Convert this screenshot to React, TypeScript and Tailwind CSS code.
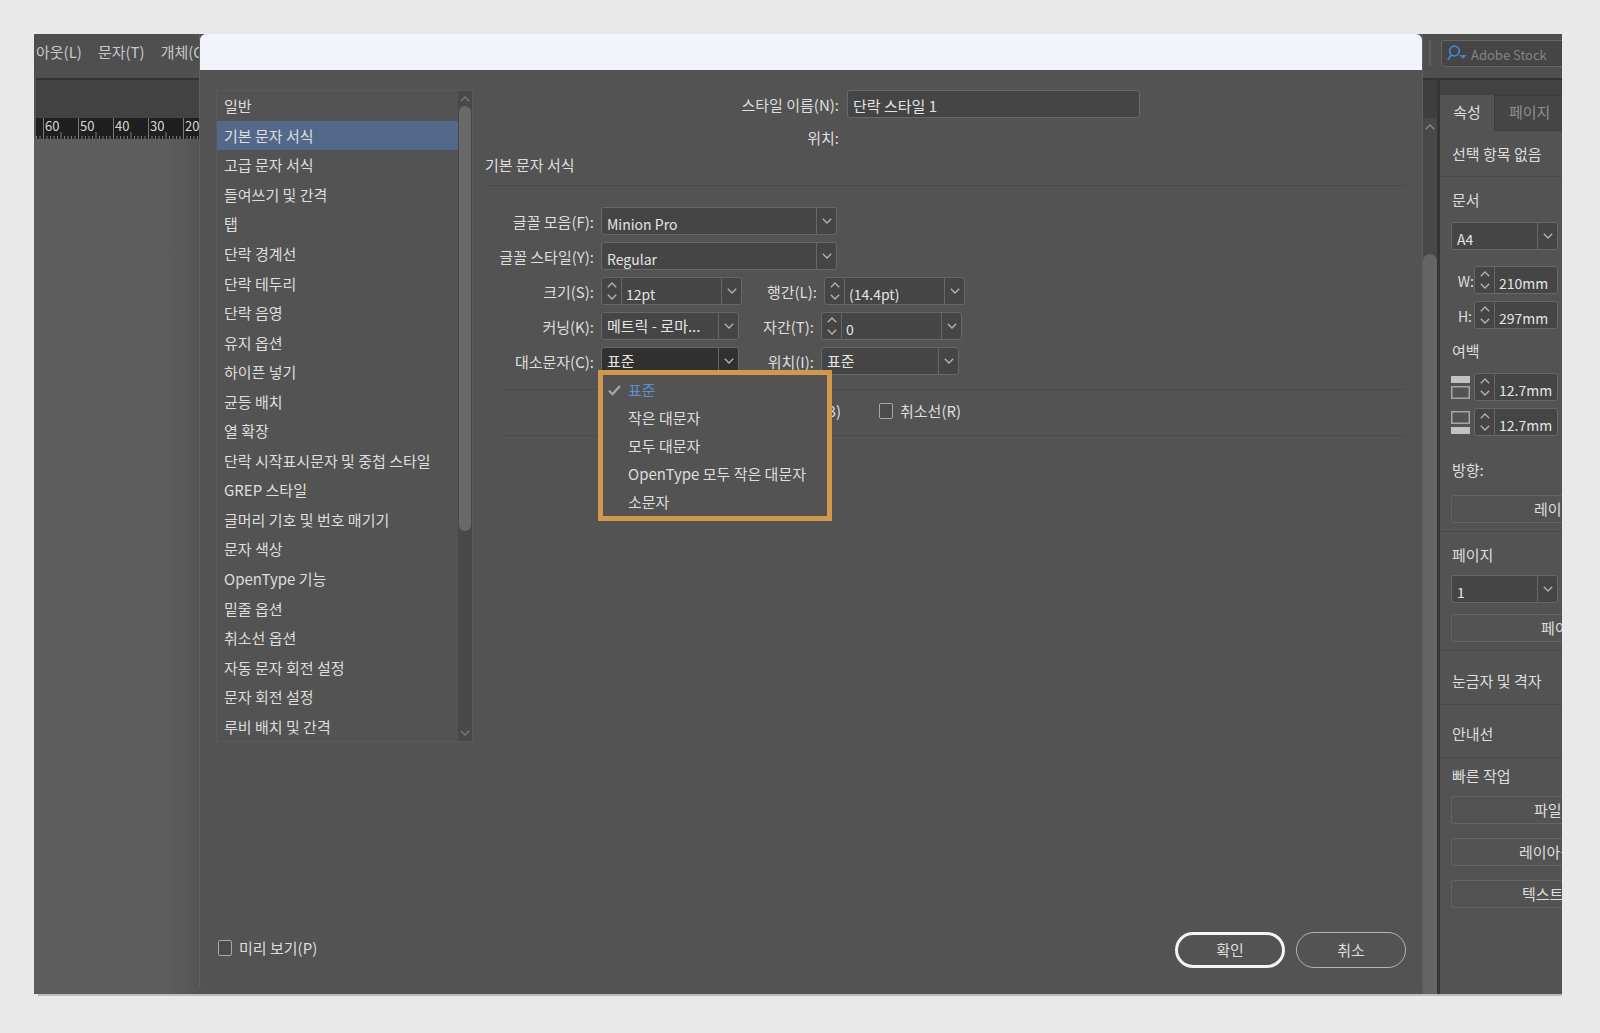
import React from "react";

const categories = [
  "일반",
  "기본 문자 서식",
  "고급 문자 서식",
  "들여쓰기 및 간격",
  "탭",
  "단락 경계선",
  "단락 테두리",
  "단락 음영",
  "유지 옵션",
  "하이픈 넣기",
  "균등 배치",
  "열 확장",
  "단락 시작표시문자 및 중첩 스타일",
  "GREP 스타일",
  "글머리 기호 및 번호 매기기",
  "문자 색상",
  "OpenType 기능",
  "밑줄 옵션",
  "취소선 옵션",
  "자동 문자 회전 설정",
  "문자 회전 설정",
  "루비 배치 및 간격",
];

const caseOptions = ["표준", "작은 대문자", "모두 대문자", "OpenType 모두 작은 대문자", "소문자"];

function Chevron({ up = false, className = "" }: { up?: boolean; className?: string }) {
  return (
    <svg className={className} width="10" height="6" viewBox="0 0 10 6" fill="none" stroke="currentColor" strokeWidth="1.3" aria-hidden="true">
      <path d={up ? "M0.8 5.2 L5 1 L9.2 5.2" : "M0.8 0.8 L5 5 L9.2 0.8"} />
    </svg>
  );
}

function Spinner({ name }: { name: string }) {
  return (
    <span className="flex w-5 shrink-0 flex-col items-center justify-between border-r border-[#666] py-1 text-[#b4b4b4]">
      <button type="button" aria-label={name + " 늘리기"} className="flex"><Chevron up /></button>
      <button type="button" aria-label={name + " 줄이기"} className="flex"><Chevron /></button>
    </span>
  );
}

function SelectBox({ id, value, width, active = false, small = false }: { id: string; value: string; width: string; active?: boolean; small?: boolean }) {
  return (
    <span className={`flex h-7 overflow-hidden rounded-[3px] border border-[#686868] ${active ? "bg-[#303030]" : "bg-[#454545]"} ${width}`}>
      <select id={id} defaultValue={value} className={`min-w-0 flex-1 appearance-none bg-transparent pl-[5px] text-[#e4e4e4] outline-none ${small ? "pt-1.5 text-[14px]" : ""}`}>
        <option>{value}</option>
      </select>
      <span className="pointer-events-none flex w-5 shrink-0 items-center justify-center border-l border-[#666] text-[#b4b4b4]">
        <Chevron />
      </span>
    </span>
  );
}

function NumberBox({ id, name, value, width, dropdown = false }: { id: string; name: string; value: string; width: string; dropdown?: boolean }) {
  return (
    <span className={`flex h-7 overflow-hidden rounded-[3px] border border-[#686868] bg-[#454545] ${width}`}>
      <Spinner name={name} />
      <input id={id} defaultValue={value} className="min-w-0 flex-1 bg-transparent pt-1.5 pl-1 text-[14px] text-[#e4e4e4] outline-none" />
      {dropdown && (
        <button type="button" aria-label={name + " 목록"} className="flex w-5 shrink-0 items-center justify-center border-l border-[#666] text-[#b4b4b4]">
          <Chevron />
        </button>
      )}
    </span>
  );
}

function Check({ label }: { label: string }) {
  return (
    <label className="flex h-5 items-center gap-[7px] whitespace-nowrap">
      <input type="checkbox" className="h-4 w-[14px] shrink-0 appearance-none rounded-[2px] border border-[#a8a8a8] bg-[#4c4c4c]" />
      {label}
    </label>
  );
}

function FirstLabel({ id, children }: { id: string; children: React.ReactNode }) {
  return <label htmlFor={id} className="mr-[7px] w-[109px] pt-px text-right whitespace-nowrap">{children}</label>;
}

function SecondLabel({ id, children }: { id: string; children: React.ReactNode }) {
  return <label htmlFor={id} className="mr-[7px] w-[75px] pt-px text-right whitespace-nowrap">{children}</label>;
}

function Ruler() {
  const ticks = Array.from({ length: 47 }, (_, i) => i);
  return (
    <div className="relative ml-0.5 h-[21px] shrink-0 bg-[#1f1f1f] text-[#d8d8d8]">
      <svg className="absolute inset-0" width="165" height="21" stroke="#7c7c7c" strokeWidth="1" aria-hidden="true">
        {ticks.map((i) => {
          const x = 7.5 + (i - 2) * 3.5;
          const k = (i + 8) % 10;
          return <line key={i} x1={x} x2={x} y1={k === 0 ? 0 : k === 5 ? 14 : 18} y2="21" />;
        })}
      </svg>
      <div className="relative flex pl-[9px] text-[13px] leading-4">
        {["60", "50", "40", "30", "20"].map((n) => (
          <span key={n} className="w-[35px] shrink-0">{n}</span>
        ))}
      </div>
    </div>
  );
}

function MarginIcon({ flipped = false }: { flipped?: boolean }) {
  return (
    <svg width="19" height="23" viewBox="0 0 19 23" aria-hidden="true">
      <rect x="0" y={flipped ? 16 : 0} width="19" height="7" fill="#c2c2c2" />
      <rect x="0.75" y={flipped ? 0.75 : 10.75} width="17.5" height="11.5" fill="none" stroke="#a6a6a6" strokeWidth="1.5" />
    </svg>
  );
}

function WideButton({ children, pad }: { children: React.ReactNode; pad: string }) {
  return (
    <button type="button" className={`flex h-7 w-[240px] shrink-0 items-center rounded-[3px] border border-[#646464] whitespace-nowrap ${pad}`}>
      {children}
    </button>
  );
}

export default function App() {
  return (
    <div className="flex min-h-screen flex-col bg-[#e9e9e9] pt-[34px] pr-[38px] pb-[37px] pl-[34px] font-['Noto_Sans_CJK_KR',sans-serif] text-[15px] leading-5 text-[#dedede]">
      <div className="flex flex-1 overflow-hidden bg-[#535353]">
        <div className="flex w-[165px] shrink-0 flex-col overflow-hidden">
          <nav className="flex h-11 shrink-0 items-start gap-4 bg-[#4f4f4f] pt-2 pl-0.5 whitespace-nowrap text-[#c8c8c8]">
            <button type="button">아웃(L)</button>
            <button type="button">문자(T)</button>
            <button type="button">개체(O)</button>
          </nav>
          <div className="ml-0.5 h-10 shrink-0 border-t-2 border-[#333] bg-[#424242]" />
          <Ruler />
          <div className="flex flex-1 bg-[#5d5d5d]">
            <div className="ml-auto w-8 bg-linear-to-r from-[#5d5d5d] to-[#545454]" />
          </div>
        </div>

        <section role="dialog" aria-label="단락 스타일 옵션" className="flex min-w-0 flex-1 flex-col rounded-b-lg border-x border-[#5f5f5f] bg-[#535353]">
          <header className="h-9 shrink-0 rounded-t-md bg-[#f1f5fb]" />
          <div className="flex flex-1 flex-col pt-5 pr-4 pl-4">
            <div className="flex gap-3">
              <div className="flex h-[652px] w-[257px] shrink-0 border border-[#5a5a5a]">
                <ul className="grid flex-1 auto-rows-fr">
                  {categories.map((c) => (
                    <li key={c} className="flex">
                      <button
                        type="button"
                        className={c === "기본 문자 서식" ? "flex flex-1 items-center bg-[#54698a] pt-px pl-[7px] whitespace-nowrap" : "flex flex-1 items-center pt-px pl-[7px] whitespace-nowrap"}
                      >
                        {c}
                      </button>
                    </li>
                  ))}
                </ul>
                <div className="flex w-[14px] shrink-0 flex-col items-center bg-[#484848] py-[5px] text-[#7c7c7c]">
                  <Chevron up />
                  <div className="mt-1 h-[425px] w-3 rounded-full bg-[#696969]" />
                  <Chevron className="mt-auto" />
                </div>
              </div>

              <div className="min-w-0 flex-1">
                <div className="flex items-center">
                  <label htmlFor="style-name" className="mr-2 w-[354px] pt-0.5 text-right">스타일 이름(N):</label>
                  <input id="style-name" defaultValue="단락 스타일 1" className="h-7 w-[293px] rounded-[3px] border border-[#686868] bg-[#454545] pt-0.5 pl-[5px] text-[#e4e4e4] outline-none" />
                </div>
                <p className="mt-[10px] w-[354px] text-right">위치:</p>
                <h2 className="mt-[7px]">기본 문자 서식</h2>
                <hr className="mt-[10px] border-[#4b4b4b]" />

                <div className="mt-[21px] flex flex-col gap-[7px]">
                  <div className="flex items-center">
                    <FirstLabel id="family">글꼴 모음(F):</FirstLabel>
                    <SelectBox id="family" value="Minion Pro" width="w-[236px]" small />
                  </div>
                  <div className="flex items-center">
                    <FirstLabel id="face">글꼴 스타일(Y):</FirstLabel>
                    <SelectBox id="face" value="Regular" width="w-[236px]" small />
                  </div>
                  <div className="flex items-center">
                    <FirstLabel id="size">크기(S):</FirstLabel>
                    <NumberBox id="size" name="크기" value="12pt" width="w-[141px]" dropdown />
                    <SecondLabel id="leading">행간(L):</SecondLabel>
                    <NumberBox id="leading" name="행간" value="(14.4pt)" width="w-[141px]" dropdown />
                  </div>
                  <div className="flex items-center">
                    <FirstLabel id="kerning">커닝(K):</FirstLabel>
                    <SelectBox id="kerning" value="메트릭 - 로마..." width="w-[138px]" />
                    <SecondLabel id="tracking">자간(T):</SecondLabel>
                    <NumberBox id="tracking" name="자간" value="0" width="w-[141px]" dropdown />
                  </div>
                  <div className="flex items-center">
                    <FirstLabel id="case">대소문자(C):</FirstLabel>
                    <div className="relative">
                      <SelectBox id="case" value="표준" width="w-[138px]" active />
                      <ul role="listbox" className="absolute top-[23px] left-[-3px] z-10 w-[234px] border-[5px] border-[#cf984d] bg-[#535353] pb-px">
                        {caseOptions.map((o, i) => (
                          <li key={o} role="option" aria-selected={i === 0} className={i === 0 ? "flex h-7 items-center pt-0.5 pl-[5px] whitespace-nowrap text-[#5f8fd2]" : "flex h-7 items-center pt-0.5 pl-[5px] whitespace-nowrap"}>
                            <span className="w-5 shrink-0 text-[#a9a9a9]">
                              {i === 0 && (
                                <svg width="13" height="11" viewBox="0 0 13 11" fill="none" stroke="currentColor" strokeWidth="2.2" aria-hidden="true">
                                  <path d="M1 5.8 L4.5 9.2 L12 1" />
                                </svg>
                              )}
                            </span>
                            {o}
                          </li>
                        ))}
                      </ul>
                    </div>
                    <SecondLabel id="position">위치(I):</SecondLabel>
                    <SelectBox id="position" value="표준" width="w-[138px]" />
                  </div>
                </div>

                <hr className="mt-[14px] ml-4 border-[#4b4b4b]" />
                <div className="mt-[11px] flex">
                  <div className="flex w-[356px] shrink-0 justify-end">
                    <Check label="줄바꿈 없음(B)" />
                  </div>
                  <div className="ml-[38px]">
                    <Check label="취소선(R)" />
                  </div>
                </div>
                <hr className="mt-[14px] ml-4 border-[#4b4b4b]" />
              </div>
            </div>

            <footer className="mt-auto mb-[26px] flex items-center">
              <div className="pb-1 pl-0.5">
                <Check label="미리 보기(P)" />
              </div>
              <button type="button" className="mr-[11px] ml-auto h-9 w-[110px] rounded-full border-[3px] border-[#f4f4f4]">확인</button>
              <button type="button" className="h-9 w-[110px] rounded-full border border-[#b4b4b4]">취소</button>
            </footer>
          </div>
        </section>

        <div className="flex w-[14px] shrink-0 flex-col items-center bg-[#484848]">
          <div className="flex h-11 w-full shrink-0 justify-center bg-[#4f4f4f] pt-1.5 pb-3">
            <div className="w-0.5 bg-[#5e5e5e]" />
          </div>
          <div className="h-10 w-full shrink-0 border-t-2 border-[#333] bg-[#3e3e3e]" />
          <Chevron up className="mt-1.5 text-[#8a8a8a]" />
          <div className="mt-[124px] w-full flex-1 rounded-t-full bg-[#646464]" />
        </div>

        <aside className="flex w-[125px] shrink-0 flex-col overflow-hidden">
          <div className="h-11 shrink-0 bg-[#4f4f4f] pt-1.5 pl-1">
            <label className="flex h-[27px] w-[200px] items-center rounded-[3px] border border-[#666] bg-[#454545] pl-[5px]">
              <svg width="20" height="18" viewBox="0 0 20 18" fill="none" aria-hidden="true">
                <circle cx="7.5" cy="6" r="4.8" stroke="#4585cf" strokeWidth="1.8" />
                <path d="M4.5 9.5 L0.8 14.8" stroke="#4585cf" strokeWidth="1.8" />
                <path d="M12.5 10 H19.5 L16 14 Z" fill="#4585cf" />
              </svg>
              <input aria-label="Adobe Stock" placeholder="Adobe Stock" className="ml-1 w-[120px] bg-transparent pt-0.5 text-[13px] outline-none placeholder:text-[#848484]" />
            </label>
          </div>
          <div className="flex flex-1 flex-col border-l-3 border-[#343434]">
            <div className="h-[17px] shrink-0 border-t-2 border-[#333] bg-[#424242]" />
            <div role="tablist" className="flex h-9 shrink-0">
              <button type="button" role="tab" aria-selected="true" className="w-[54px] shrink-0 pb-0.5">속성</button>
              <button type="button" role="tab" aria-selected="false" className="w-[100px] shrink-0 border border-[#3c3c3c] bg-[#454545] pb-0.5 pl-[14px] text-left text-[#8f8f8f]">페이지</button>
            </div>

            <div className="flex h-[46px] shrink-0 items-center border-b border-[#4a4a4a] pl-3 whitespace-nowrap">선택 항목 없음</div>
            <div className="flex h-[355px] shrink-0 flex-col border-b border-[#4a4a4a] pt-[13px] pl-[11px]">
              <h3 className="pl-px">문서</h3>
              <div className="mt-3">
                <SelectBox id="page-size" value="A4" width="w-[107px]" small />
              </div>
              <div className="mt-4 flex items-center">
                <label htmlFor="page-w" className="w-[23px] pt-0.5 text-right text-[14px]">W:</label>
                <NumberBox id="page-w" name="W" value="210mm" width="w-[84px]" />
              </div>
              <div className="mt-[7px] flex items-center">
                <label htmlFor="page-h" className="w-[23px] pt-0.5 pr-0.5 text-right text-[14px]">H:</label>
                <NumberBox id="page-h" name="H" value="297mm" width="w-[84px]" />
              </div>
              <h3 className="mt-3 pl-px">여백</h3>
              <div className="mt-3 flex items-center gap-1">
                <MarginIcon />
                <NumberBox id="margin-top" name="위쪽 여백" value="12.7mm" width="w-[84px]" />
              </div>
              <div className="mt-[7px] flex items-center gap-1">
                <MarginIcon flipped />
                <NumberBox id="margin-bottom" name="아래쪽 여백" value="12.7mm" width="w-[84px]" />
              </div>
              <h3 className="mt-6 pl-px">방향:</h3>
              <div className="mt-[15px] flex"><WideButton pad="pl-[82px]">레이아웃 조정</WideButton></div>
            </div>
            <div className="flex h-[119px] shrink-0 flex-col border-b border-[#4a4a4a] pt-[13px] pl-[11px]">
              <h3 className="pl-px">페이지</h3>
              <div className="mt-[10px]">
                <SelectBox id="page-number" value="1" width="w-[107px]" small />
              </div>
              <div className="mt-[11px] flex"><WideButton pad="pl-[89px]">페이지 편집</WideButton></div>
            </div>
            <div className="flex h-[54px] shrink-0 items-center border-b border-[#4a4a4a] pt-1.5 pl-3 whitespace-nowrap">눈금자 및 격자</div>
            <div className="flex h-[53px] shrink-0 items-center border-b border-[#4a4a4a] pt-1.5 pl-3">안내선</div>
            <div className="flex flex-col pt-2 pl-[11px]">
              <h3 className="pl-px">빠른 작업</h3>
              <div className="mt-[10px] flex flex-col gap-[14px]">
                <WideButton pad="pl-[82px]">파일 가져오기</WideButton>
                <WideButton pad="pl-[67px]">레이아웃 조정</WideButton>
                <WideButton pad="pl-[70px]">텍스트 프레임</WideButton>
              </div>
            </div>
          </div>
        </aside>
      </div>
      <div className="ml-1 h-0.5 bg-[#c0bbbb]" />
    </div>
  );
}
